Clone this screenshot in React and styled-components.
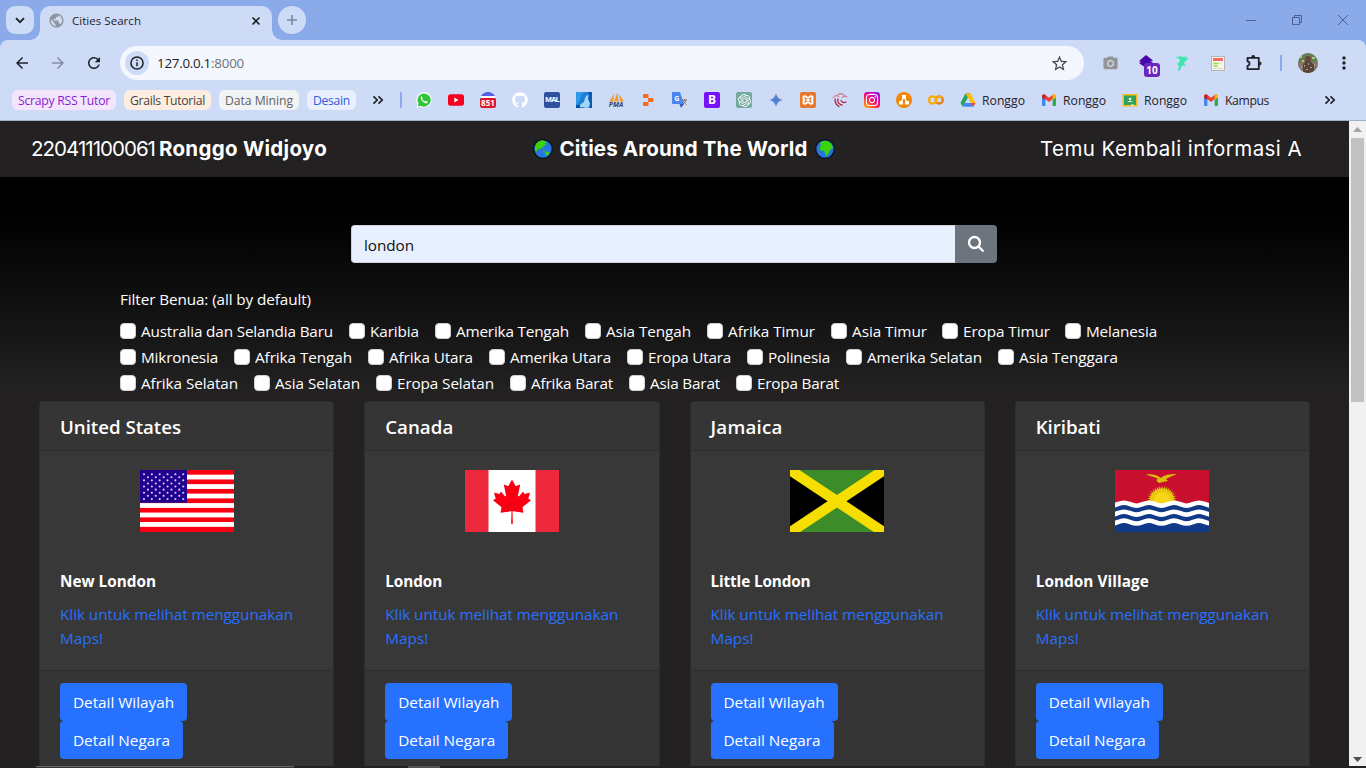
import React, { useLayoutEffect, useRef, useState } from "react";
import styled, { createGlobalStyle } from "styled-components";
import { FaGithub, FaInstagram } from "react-icons/fa";
import { SiOpenai } from "react-icons/si";
import { MdArrowBack, MdArrowForward, MdRefresh, MdStarBorder, MdMoreVert, MdPublic, MdPhotoCamera } from "react-icons/md";

const Global = createGlobalStyle`
  *, *::before, *::after { box-sizing: border-box; }
  body { margin: 0; overflow: hidden; font-family: "Open Sans", "Noto Sans", sans-serif; }
  svg { display: block; flex: none; }
  a { text-decoration: none; }
`;

/* Single line of text whose tracking is adjusted so that it fills a set width. */
const Line = styled.span`
  display: inline-block;
  white-space: pre;
`;
function Fit({ w, children }) {
  const ref = useRef(null);
  const [spacing, setSpacing] = useState(0);
  useLayoutEffect(() => {
    const natural = ref.current.getBoundingClientRect().width;
    setSpacing((w - natural) / ref.current.textContent.length);
  }, [w]);
  return <Line ref={ref} style={{ letterSpacing: spacing }}>{children}</Line>;
}

const Screen = styled.div`
  width: 1366px;
  height: 768px;
  display: flex;
  flex-direction: column;
  overflow: hidden;
  background: #232122;
`;

/* ---------- browser window ---------- */
const TabStrip = styled.div`
  height: 40px;
  flex: none;
  display: flex;
  padding: 6px 0 0 6px;
  background: #8aaaea;
`;
const TabMenu = styled.div`
  width: 28px;
  height: 28px;
  display: grid;
  place-items: center;
  border-radius: 9px;
  background: #cedbf6;
`;
const Tab = styled.div`
  position: relative;
  width: 232px;
  height: 34px;
  margin: 0 6px;
  padding: 0 9px 5px 8px;
  display: flex;
  align-items: center;
  border-radius: 10px 10px 0 0;
  background: #cedbf6;
  font-size: 11.5px;
  color: #1f2227;
  &::before, &::after {
    content: "";
    position: absolute;
    bottom: 0;
    width: 10px;
    height: 10px;
  }
  &::before { left: -10px; background: radial-gradient(circle at 0 0, transparent 9.5px, #cedbf6 10px); }
  &::after { right: -10px; background: radial-gradient(circle at 100% 0, transparent 9.5px, #cedbf6 10px); }
`;
const TabTitle = styled.div`
  flex: 1;
  margin-left: 7px;
`;
const NewTab = styled(TabMenu)`
  border-radius: 50%;
`;
const WindowButtons = styled.div`
  flex: 1;
  height: 28px;
  display: flex;
  align-items: center;
  justify-content: flex-end;
  gap: 34px;
  padding-right: 17px;
`;
const Chrome = styled.div`
  flex: none;
  height: 81px;
  background: #8aaaea;
`;
const ChromeInner = styled.div`
  height: 81px;
  background: #cedbf6;
  border-radius: 8px 8px 0 0;
  border-bottom: 1px solid #a1aecb;
`;
const Toolbar = styled.div`
  height: 46px;
  padding: 6px 10px 6px 13px;
  display: flex;
  align-items: center;
`;
const NavButtons = styled.div`
  flex: none;
  width: 107px;
  display: flex;
  gap: 18px;
  color: #1f2227;
`;
const Omnibox = styled.div`
  flex: none;
  width: 964px;
  height: 34px;
  padding: 0 15px 0 5px;
  display: flex;
  align-items: center;
  border-radius: 17px;
  background: #f4f7fd;
`;
const InfoButton = styled.div`
  width: 24px;
  height: 24px;
  display: grid;
  place-items: center;
  border-radius: 50%;
  background: #cedbf6;
`;
const Url = styled.div`
  flex: 1;
  display: flex;
  margin-left: 8px;
  font-size: 13.4px;
  color: #1f2227;
`;
const Port = styled.span`
  color: #6d7279;
`;
const Extensions = styled.div`
  flex: 1;
  display: flex;
  align-items: center;
  margin-left: 16px;
`;
const ExtSlot = styled.div`
  position: relative;
  flex: none;
  width: 20px;
  height: 20px;
  margin-right: ${(p) => p.$gap ?? 16}px;
  display: grid;
  place-items: center;
`;
const Badge = styled.div`
  position: absolute;
  left: 8px;
  top: 10px;
  width: 16px;
  height: 14px;
  border-radius: 3px;
  background: #6a27bd;
  color: #fff;
  font: 700 10px/14px "Open Sans", sans-serif;
  text-align: center;
`;
const Divider = styled.div`
  width: 2px;
  height: 16px;
  background: #8aaaea;
`;
const Bookmarks = styled.div`
  height: 28px;
  padding: 0 30px 0 12px;
  display: flex;
  align-items: center;
  font-size: 12.2px;
  color: #1f2227;
`;
const Chip = styled.div`
  width: ${(p) => p.$w}px;
  height: 20px;
  margin-right: 8px;
  display: flex;
  align-items: center;
  justify-content: center;
  border-radius: 6px;
  background: ${(p) => p.$bg};
  color: ${(p) => p.$fg};
`;
const BookmarkMore = styled.div`
  width: 30px;
  display: flex;
  align-items: center;
  justify-content: space-between;
  margin-left: 8px;
`;
const Icons = styled.div`
  display: flex;
  gap: 16px;
  margin: 0 16px 0 14px;
`;
const Named = styled.div`
  display: flex;
  align-items: center;
  gap: 6px;
  margin-right: 16px;
`;
const Overflow = styled.div`
  margin-left: auto;
`;
const Tile = styled.div`
  width: 16px;
  height: 16px;
  display: grid;
  place-items: center;
  border-radius: ${(p) => p.$r ?? 2}px;
  background: ${(p) => p.$bg};
  color: #fff;
  font: 700 ${(p) => p.$size ?? 7}px/1 "Open Sans", sans-serif;
`;
const HelmetIcon = styled.div`
  width: 16px;
  height: 16px;
  padding-top: 6px;
  border-radius: 8px 8px 3px 3px;
  background: linear-gradient(#5360e8 4px, #fff 4px, #fff 6px, #5360e8 6px);
`;
const Count = styled.div`
  height: 10px;
  border-radius: 3px;
  background: #df1725;
  color: #fff;
  font: 700 8px/10px "Open Sans", sans-serif;
  text-align: center;
`;

/* ---------- page ---------- */
const Viewport = styled.div`
  height: 645px;
  flex: none;
  display: flex;
`;
const Page = styled.div`
  width: 1349px;
  overflow: hidden;
  background: linear-gradient(#000 0, #000 90px, #0d0d0d 165px, #232122 270px);
`;
const Navbar = styled.nav`
  height: 56px;
  padding: 0 47px 0 31px;
  display: flex;
  align-items: center;
  justify-content: space-between;
  background: #232122;
  color: #fff;
  font: 400 20.5px/30px Inter, sans-serif;
`;
const Brand = styled.div`
  display: flex;
  align-items: center;
  gap: ${(p) => p.$gap}px;
`;
const Search = styled.form`
  width: 646px;
  height: 38px;
  margin: 48px 0 0 351px;
  display: flex;
`;
const Field = styled.div`
  flex: 1;
  padding: 7px 12px;
  border: 1px solid #ced4da;
  border-right: 0;
  border-radius: 4px 0 0 4px;
  background: #e8efff;
  font-size: 15.3px;
  line-height: 24px;
  color: #111;
`;
const Submit = styled.div`
  width: 42px;
  display: grid;
  place-items: center;
  border-radius: 0 4px 4px 0;
  background: #6c757d;
`;
const Filter = styled.section`
  margin: 24px 0 0 120px;
  color: #fff;
  font-size: 15.3px;
  line-height: 24px;
`;
const FilterRow = styled.div`
  display: flex;
  height: 26px;
  &:first-of-type { margin-top: 7px; }
`;
const Option = styled.label`
  display: flex;
  align-items: center;
  gap: 5px;
  margin-right: ${(p) => p.$gap}px;
`;
const Box = styled.span`
  width: 16px;
  height: 16px;
  border: 1px solid #d0d0d2;
  border-radius: 4px;
  background: #fff;
`;
const Cards = styled.div`
  display: grid;
  grid-template-columns: repeat(4, 295.25px);
  column-gap: 30px;
  margin: 5px 0 0 39px;
`;
const Card = styled.article`
  height: 400px;
  border: 1px solid #2d2d2d;
  border-radius: 4px;
  background: #383838;
  color: #fff;
  font-size: 15.3px;
`;
const CardHead = styled.header`
  height: 49px;
  padding: 0 20px;
  display: flex;
  align-items: center;
  border-bottom: 1px solid #2d2d2d;
  background: #353535;
  font-size: 18.7px;
  font-weight: 600;
`;
const CardBody = styled.div`
  height: 219px;
  padding: 18.5px 20px 0;
  display: flex;
  flex-direction: column;
  line-height: 24px;
`;
const Flag = styled.svg`
  align-self: center;
  width: 94px;
  height: 62.5px;
  margin-bottom: 37px;
`;
const City = styled.div`
  font-weight: 700;
  margin-bottom: 9px;
`;
const MapLink = styled.a`
  display: flex;
  flex-direction: column;
  align-items: flex-start;
  color: #2770ff;
`;
const CardFoot = styled.footer`
  height: 131px;
  padding: 12px 20px;
  display: flex;
  flex-direction: column;
  align-items: flex-start;
  border-top: 1px solid #2d2d2d;
  background: #353535;
`;
const Button = styled.a`
  width: ${(p) => p.$w}px;
  height: 38px;
  display: flex;
  align-items: center;
  justify-content: center;
  border-radius: 4px;
  background: #2672ff;
  color: #fff;
`;
const Scrollbar = styled.div`
  width: 17px;
  padding: 6px 2px 4px;
  display: flex;
  flex-direction: column;
  align-items: center;
  background: #f1f1f1;
`;
const Thumb = styled.div`
  width: 13px;
  height: 264px;
  margin: 6px 0 auto;
  background: #c1c1c1;
`;
const BottomEdge = styled.div`
  height: 2px;
  padding-left: 36px;
  display: flex;
  gap: 114px;
  background: #202223;
`;
const Edge = styled.div`
  width: ${(p) => p.$w}px;
  height: 2px;
  border-top: 1px solid ${(p) => p.$c};
  background: ${(p) => p.$bg};
`;

/* ---------- drawings ---------- */
const Chevrons = () => (
  <svg width="12" height="12" viewBox="0 0 12 12" fill="none" stroke="#1f2227" strokeWidth="1.7"><path d="M1.5 2.3 5.2 6 1.5 9.7M6.5 2.3 10.2 6 6.5 9.7" /></svg>
);
const WhatsApp = () => (
  <svg width="16" height="16" viewBox="0 0 16 16"><path d="M8 .3a7.6 7.6 0 0 1 0 15.3c-1.3 0-2.4-.3-3.5-.9L.3 15.9l1.2-4.1A7.6 7.6 0 0 1 8 .3z" fill="#fff" /><path d="M8 1.4a6.6 6.6 0 1 1-3.2 12.3l-3 .8.8-2.9A6.6 6.6 0 0 1 8 1.4z" fill="#2fc43a" /><path d="M5.5 4.3c-.9.5-1 1.7-.5 2.8.8 1.9 2.3 3.5 4.3 4.2 1 .3 2-.1 2.3-1 .1-.5 0-.6-.3-.8l-1.4-.7c-.3-.1-.4 0-.9.7-1.3-.5-2.3-1.4-2.9-2.6.5-.6.6-.7.5-1l-.6-1.4c-.1-.2-.3-.3-.5-.2z" fill="#fff" /></svg>
);
const YouTube = () => (
  <svg width="16" height="16" viewBox="0 0 16 16"><rect y="2.3" width="16" height="11.5" rx="2.5" fill="#f5001d" /><path d="m6.3 5.5 4.3 2.5-4.3 2.5z" fill="#fff" /></svg>
);
const Helmet = () => <HelmetIcon><Count><Fit w={14}>851</Fit></Count></HelmetIcon>;
const BlueArt = () => (
  <svg width="16" height="16" viewBox="0 0 16 16"><rect width="16" height="16" fill="#1e7fd8" /><path d="M0 0h8L5 4l-2 6-3 3z" fill="#2c9aea" /><path d="m3 15 2-3 3-2 1-4 2-3 2 1-1 3 2 4v4l-4 1-3-1z" fill="#9fd8f8" /><path d="M12 0h4v16h-3l1-5-2-5 1-3z" fill="#0f57b4" /><path d="M0 13h4v3H0z" fill="#0c4d9e" /></svg>
);
const Pma = () => (
  <svg width="16" height="16" viewBox="0 0 16 16"><path d="M6 2 1 9.5h4.5zM9.5 0 6 9.5h4.5zM11 2l1 7.5h4z" fill="#f29a32" /><text x="8" y="15.2" textAnchor="middle" fontFamily="Open Sans" fontWeight="700" fontStyle="italic" fontSize="6.8" fill="#394261">PMA</text></svg>
);
const Replit = () => (
  <svg width="16" height="16" viewBox="0 0 16 16" fill="#f26a1e"><rect x="3" y="2" width="5.5" height="4" rx="1" /><rect x="8" y="6" width="5.5" height="4" rx="1" /><rect x="3" y="10" width="5.5" height="4" rx="1" /></svg>
);
const Translate = () => (
  <svg width="16" height="16" viewBox="0 0 16 16"><path d="M6 4h10v12H9z" fill="#d7dce3" /><path d="M1 0h7l4 12H1a1 1 0 0 1-1-1V1a1 1 0 0 1 1-1z" fill="#4b86f0" /><path d="M7.5 12H12l-3 4z" fill="#315abc" /><text x="4.7" y="8.6" textAnchor="middle" fontFamily="Open Sans" fontWeight="700" fontSize="7" fill="#fff">G</text><path d="M10 8h5M12.5 7v1M14 8c-.5 2-1.5 3-3 4M11.5 9c.5 1.5 1.5 2.5 3 3.5" stroke="#6c737b" fill="none" /></svg>
);
const Gemini = () => (
  <svg width="16" height="16" viewBox="0 0 16 16"><defs><linearGradient id="gem" x1="0" x2="1" y1="1" y2="0"><stop stopColor="#418df5" /><stop offset=".55" stopColor="#4f80d6" /><stop offset="1" stopColor="#d46d7b" /></linearGradient></defs><path d="M8 1c.8 4 3 6.2 7 7-4 .8-6.2 3-7 7-.8-4-3-6.2-7-7 4-.8 6.2-3 7-7z" fill="url(#gem)" /></svg>
);
const Xampp = () => (
  <svg width="16" height="16" viewBox="0 0 16 16"><rect width="16" height="16" rx="2" fill="#e7792b" /><path d="M5 4.2c-1.600 0-2 1.300-1.500 2.300L4.200 8l-.7 1.500c-.5 1 0 2.300 1.500 2.300 1.300 0 1.500-1.500 3-1.500s1.700 1.500 3 1.500c1.500 0 2-1.300 1.500-2.300L11.800 8l.7-1.500c.5-1 .1-2.300-1.500-2.300-1.300 0-1.500 1.500-3 1.500s-1.700-1.500-3-1.500zM6.300 8h3.400" fill="none" stroke="#fff" strokeWidth="1.9" /></svg>
);
const Swirl = () => (
  <svg width="16" height="16" viewBox="0 0 16 16" fill="none" strokeLinecap="round"><path d="M1 5.5C3 3 6 3.5 7 4.500M6 2.500c3-1.500 6-.5 7 1.500M10 5.500c2-2 4-1.500 5-.5" stroke="#d5505f" strokeWidth="1" /><path d="M3 7c0 3 1 6 4 7.500M6 7c-1 3 1 5.500 4 6M9 8.500c1 2 3 2.500 5 1.500" stroke="#b3203c" strokeWidth="1.3" /></svg>
);
const Drawio = () => (
  <svg width="16" height="16" viewBox="0 0 16 16"><circle cx="8" cy="8" r="8" fill="#f08705" /><path d="M8 5 4.800 10.500M8 5l3.200 5.500" stroke="#fff" strokeWidth="1.3" /><g fill="#fff"><rect x="6" y="3" width="4" height="3.5" /><rect x="3" y="9" width="4" height="3.5" /><rect x="9" y="9" width="4" height="3.5" /></g></svg>
);
const Colab = () => (
  <svg width="16" height="16" viewBox="0 0 16 16" fill="none" strokeWidth="2.3"><path d="M7.200 5.500a3.600 3.600 0 1 0 0 5" stroke="#f9ab00" /><circle cx="11.2" cy="8" r="3.6" stroke="#e87a12" /><path d="M8.700 10.600a3.600 3.600 0 0 1 5-5.100" stroke="#f9ab00" /></svg>
);
const Drive = () => (
  <svg width="16" height="16" viewBox="0 0 16 16"><path d="M5.500 1.500h5L8 5.800 2.700 14.700.5 11z" fill="#21a35b" /><path d="M5.500 1.500h5l5 9.500h-4.700z" fill="#fbbc04" /><path d="M5.100 11h5.700l2.500 3.700H2.700z" fill="#4285f4" /><path d="M10.800 11h4.700l-2.200 3.700z" fill="#ea4335" /><path d="m8 5.800 2.800 5.200H5.100z" fill="#cedbf6" /></svg>
);
const Gmail = () => (
  <svg width="16" height="16" viewBox="0 0 16 16"><path d="M1 4.500V13a1 1 0 0 0 1 1h2.400V7z" fill="#4285f4" /><path d="M15 4.500V13a1 1 0 0 1-1 1h-2.400V7z" fill="#34a853" /><path d="M1 4.500C1 2.500 3 2 4.400 3L8 5.800 11.600 3C13 2 15 2.500 15 4.500L8 10z" fill="#ea4335" /><path d="M11.600 3C13 2 15 2.500 15 4.500v1L11.600 8z" fill="#fbbc04" /><path d="M1 4.500C1 2.500 3 2 4.400 3v5L1 5.500z" fill="#c5221f" /></svg>
);
const Classroom = () => (
  <svg width="16" height="16" viewBox="0 0 16 16"><rect x=".5" y="2" width="15" height="12.5" rx="1" fill="#f9bc14" /><rect x="2" y="3.500" width="12" height="9.500" fill="#30a35a" /><circle cx="8" cy="7" r="1.2" fill="#fff" /><path d="M5 10c1-1.500 5-1.500 6 0z" fill="#fff" /><path d="M9 12.500h3v1H9z" fill="#fff" /></svg>
);
const Purple = () => (
  <svg width="18" height="18" viewBox="0 0 18 18" fill="#4b05ac"><path d="m9 1 7 5.500-3 1.500h3l-7 6-7-5 2-1-2-1z" /></svg>
);
const Bird = () => (
  <svg width="16" height="18" viewBox="0 0 16 18" fill="#3fe6ac"><path d="m1 2 4 1.500L6 1.500l2 1.500 6-.5-3 1.500 4 .5-3.500 2.500L10 9l1.500 3.500-2.500-1-2 1.500-1 4-2-1 1-4-2-2 2.500-2 .5-2.500-3-1.500z" /></svg>
);
const Report = () => (
  <svg width="14" height="15" viewBox="0 0 14 15"><rect x=".5" y=".5" width="13" height="14" fill="#f7f4ed" stroke="#b7b5af" /><path d="M2 2h10v3H2z" fill="#fb6868" /><path d="M2.500 7.500h5M2.500 10h4" stroke="#94df27" strokeWidth="1.5" /><path d="M8 7.500h3M2 12.500h10" stroke="#ded8d0" /></svg>
);
const Puzzle = () => (
  <svg width="18" height="18" viewBox="0 0 18 18"><path d="M2.500 3.800h11.300v11.400H2.500v-3.400c2.700-.2 2.700-4.200 0-4.400z" fill="none" stroke="#1f2227" strokeWidth="1.8" strokeLinejoin="round" /><path d="M6.200 3.500a2 2.400 0 0 1 4 0zM14.200 7.500a2.400 2 0 0 1 0 4z" fill="#1f2227" /></svg>
);
const Avatar = () => (
  <svg width="20" height="20" viewBox="0 0 20 20"><defs><clipPath id="face"><circle cx="10" cy="10" r="10" /></clipPath></defs><g clipPath="url(#face)"><path fill="#657d50" d="M0 0h20v20H0z" /><path d="M0 9h20v11H0z" fill="#8a776b" /><path d="M5 20V11l3-3h4l4 4v8z" fill="#59443b" /><circle cx="10" cy="6" r="3" fill="#69453a" /><path d="M2 3h2v2H2zM14 4h3v2h-3zM4 7h2v2H4z" fill="#a8c889" /><path d="M6 12h1v2H6zM10 10h1v2h-1zM12 14h2v1h-2zM8 16h2v1H8zM3 13h1v2H3zM16 11h1v2h-1z" fill="#b49a86" /></g></svg>
);
const Info = () => (
  <svg width="14" height="14" viewBox="0 0 14 14"><circle cx="7" cy="7" r="6.1" fill="none" stroke="#1f2227" strokeWidth="1.5" /><path d="M6.250 6.300h1.500v4h-1.500zM6.250 3.600h1.500v1.500h-1.500z" fill="#1f2227" /></svg>
);
const Globe = ({ africa }) => (
  <svg width="20" height="20" viewBox="0 0 20 20"><circle cx="10" cy="10" r="9.3" fill="#2874dd" stroke="#080d14" strokeWidth="1.2" />{africa
    ? <path d="M5 4 8 2h5l3 2.500 2 4-2.500 2-1.500 3-1.500 3-1.500.5-1.200-3-.5-2-3.800-.5L4.500 8.500 6 6z" fill="#3bd40a" />
    : <path d="M2 11C1.500 6 4 2 8.500 1.500c2 0 4 .5 5.500 1.500l-2 1 1.500 1.500-3 1.500.5 1.500-2-.5-1.500 2.500-1-1.500L4.500 11l-1 2zM9.500 11.500l2.500.5-.5 1.500zM12.500 13l2.500-.7 1.500 2.200-2.500 2-2-1z" fill="#3bd40a" />}</svg>
);

const UsFlag = () => (
  <Flag viewBox="0 0 94 63" preserveAspectRatio="none">
    <rect width="94" height="63" fill="#fff" />
    {[0, 1, 2, 3, 4, 5, 6].map((i) => <rect key={i} y={i * 9.55} width="94" height={i === 6 ? 5.7 : 4.7} fill="#f80012" />)}
    <rect width="47" height="33" fill="#20008f" />
    {Array.from({ length: 9 }, (_, r) => Array.from({ length: r % 2 ? 5 : 6 }, (_, c) => (
      <circle key={`${r}-${c}`} cx={4 + c * 7.85 + (r % 2 ? 3.9 : 0)} cy={4.2 + r * 3.12} r="1.05" fill="#d8cff0" />
    )))}
  </Flag>
);
const CaFlag = () => (
  <Flag viewBox="0 0 94 63" preserveAspectRatio="none">
    <rect width="94" height="63" fill="#ee283c" /><rect x="23.5" width="47" height="63" fill="#fff" />
    <path d="m47 9.500 3.300 6.200c.4.600 1 .6 1.500.3l3.400-1.500-2.200 11.300c-.1.800.5 1 1.200.4l4-4.600.9 2c.1.400.5.5.9.4l5-1-1.500 5.300c-.1.500 0 .8.500 1l2 1.200-8 6.600c-.5.400-.5.7-.4 1.200l.9 4.700-10.200-1.300c-.6-.1-.8.2-.8.7l.4 11.700h-1.800l.4-11.700c0-.5-.2-.8-.8-.7L35.500 43l.9-4.700c.1-.5.1-.8-.4-1.200l-8-6.600 2-1.200c.5-.2.6-.5.5-1L29 23l5 1c.4.1.8 0 .9-.4l.9-2 4 4.600c.7.600 1.300.4 1.200-.4L38.800 14.500l3.400 1.500c.5.300 1.100.3 1.500-.3z" fill="#f80012" />
  </Flag>
);
const JmFlag = () => (
  <Flag viewBox="0 0 94 63" preserveAspectRatio="none">
    <rect width="94" height="63" fill="#3c8d29" /><path d="M0 0 47 31.500 0 63zM94 0 47 31.500 94 63z" fill="#000" /><path d="m0 0 94 63M94 0 0 63" stroke="#f6df00" strokeWidth="10.5" />
  </Flag>
);
const wave = (y) => [0, 1, 2, 3].map((k) => `M${-3.5 + k * 25} ${y}c5 0 7.500-3 12.500-3s7.500 3 12.500 3`).join("");
const KiFlag = () => (
  <Flag viewBox="0 0 94 63" preserveAspectRatio="none">
    <rect width="94" height="35" fill="#c8102e" />
    {Array.from({ length: 19 }, (_, i) => <path key={i} d="m47 16 2 7h-4z" fill="#dec009" transform={`rotate(${(i - 9) * 10} 47 31)`} />)}
    <circle cx="47" cy="31" r="12" fill="#e9c70f" /><circle cx="47" cy="31" r="8.5" fill="#f9d617" />
    <path d="M31 4c6 0 11 1 15 4 3-3 8-4 16-4-4 2-8 3-11 5l2 2-5 1-4 1-3-3 2-1c-3-2-7-2-12-5z" fill="#d9bd0b" />
    <rect y="35.5" width="94" height="27.5" fill="#103a88" />
    <g fill="none" stroke="#fff" strokeWidth="4.6">{[36, 45, 54].map((y) => <path key={y} d={wave(y)} />)}</g>
  </Flag>
);

/* ---------- data ---------- */
const chips = [
  { label: "Scrapy RSS Tutor", w: 104, t: 92, bg: "#f2e5fc", fg: "#8a1bd5" },
  { label: "Grails Tutorial", w: 87, t: 75, bg: "#feeee1", fg: "#474340" },
  { label: "Data Mining", w: 80, t: 68, bg: "#f1f3f4", fg: "#5f6368" },
  { label: "Desain", w: 49, t: 37, bg: "#e8f0fe", fg: "#2d5bdc" },
];
const filters = [
  [["Australia dan Selandia Baru", 192, 16], ["Karibia", 49, 16], ["Amerika Tengah", 113, 16], ["Asia Tengah", 85, 16], ["Afrika Timur", 87, 16], ["Asia Timur", 75, 15], ["Eropa Timur", 87, 15], ["Melanesia", 71, 0]],
  [["Mikronesia", 77, 16], ["Afrika Tengah", 97, 16], ["Afrika Utara", 84, 16], ["Amerika Utara", 101, 16], ["Eropa Utara", 83, 16], ["Polinesia", 62, 16], ["Amerika Selatan", 115, 16], ["Asia Tenggara", 99, 0]],
  [["Afrika Selatan", 97, 16], ["Asia Selatan", 85, 16], ["Eropa Selatan", 97, 16], ["Afrika Barat", 82, 16], ["Asia Barat", 70, 16], ["Eropa Barat", 82, 0]],
];
const cities = [
  { country: "United States", cw: 121, city: "New London", w: 96, flag: <UsFlag /> },
  { country: "Canada", cw: 68, city: "London", w: 57, flag: <CaFlag /> },
  { country: "Jamaica", cw: 72, city: "Little London", w: 100, flag: <JmFlag /> },
  { country: "Kiribati", cw: 65, city: "London Village", w: 113, flag: <KiFlag /> },
];

function BookmarkBar() {
  return (
    <Bookmarks>
      {chips.map((c) => <Chip key={c.label} $w={c.w} $bg={c.bg} $fg={c.fg}><Fit w={c.t}>{c.label}</Fit></Chip>)}
      <BookmarkMore><Chevrons /><Divider /></BookmarkMore>
      <Icons>
        <WhatsApp /><YouTube /><Helmet />
        <FaGithub size={16} color="#fff" />
        <Tile $bg="#2e51a2" $size={7.5}><Fit w={14}>MAL</Fit></Tile>
        <BlueArt /><Pma /><Replit /><Translate />
        <Tile $bg="#7610f5" $size={12}>B</Tile>
        <Tile $bg="#74aa9c"><SiOpenai size={13} /></Tile>
        <Gemini /><Xampp /><Swirl />
        <Tile $bg="linear-gradient(35deg,#ffc400,#fc244f 40%,#e000b8 65%,#7725ed)" $r={3}><FaInstagram size={14} /></Tile>
        <Drawio /><Colab />
      </Icons>
      <Named><Drive /><Fit w={43}>Ronggo</Fit></Named>
      <Named><Gmail /><Fit w={43}>Ronggo</Fit></Named>
      <Named><Classroom /><Fit w={43}>Ronggo</Fit></Named>
      <Named><Gmail /><Fit w={44}>Kampus</Fit></Named>
      <Overflow><Chevrons /></Overflow>
    </Bookmarks>
  );
}

function Browser() {
  return (
    <>
      <TabStrip>
        <TabMenu><svg width="10" height="7" viewBox="0 0 10 7" fill="none" stroke="#1f2227" strokeWidth="1.9"><path d="m1 1.200 4 4 4-4" /></svg></TabMenu>
        <Tab>
          <MdPublic size={17} color="#8e959e" />
          <TabTitle><Fit w={69}>Cities Search</Fit></TabTitle>
          <svg width="14" height="14" viewBox="0 0 14 14" stroke="#1f2227" strokeWidth="1.6"><path d="m3.500 3.500 7 7m0-7-7 7" /></svg>
        </Tab>
        <NewTab><svg width="12" height="12" viewBox="0 0 12 12" stroke="#7988a5" strokeWidth="1.6"><path d="M6 1v10M1 6h10" /></svg></NewTab>
        <WindowButtons>
          <svg width="12" height="12" viewBox="0 0 12 12" stroke="#4d618a"><path d="M1 6.500h10" /></svg>
          <svg width="12" height="12" viewBox="0 0 12 12" stroke="#4d618a" fill="none"><path d="M1.500 3.500h7v7h-7zM3.500 3.500v-2h7v7h-2" /></svg>
          <svg width="12" height="12" viewBox="0 0 12 12" stroke="#4d618a"><path d="m1 1 10 10M11 1 1 11" /></svg>
        </WindowButtons>
      </TabStrip>
      <Chrome>
        <ChromeInner>
          <Toolbar>
            <NavButtons><MdArrowBack size={18} /><MdArrowForward size={18} color="#838fa6" /><MdRefresh size={18} /></NavButtons>
            <Omnibox>
              <InfoButton><Info /></InfoButton>
              <Url><Fit w={54}>127.0.0.1</Fit><Port><Fit w={33}>:8000</Fit></Port></Url>
              <MdStarBorder size={19} color="#474b51" />
            </Omnibox>
            <Extensions>
              <ExtSlot><MdPhotoCamera size={17} color="#949494" /></ExtSlot>
              <ExtSlot><Purple /><Badge>10</Badge></ExtSlot>
              <ExtSlot><Bird /></ExtSlot>
              <ExtSlot><Report /></ExtSlot>
              <ExtSlot $gap={7}><Puzzle /></ExtSlot>
              <ExtSlot $gap={7}><Divider /></ExtSlot>
              <ExtSlot><Avatar /></ExtSlot>
              <MdMoreVert size={20} color="#1f2227" />
            </Extensions>
          </Toolbar>
          <BookmarkBar />
        </ChromeInner>
      </Chrome>
    </>
  );
}

export default function App() {
  return (
    <Screen>
      <Global />
      <Browser />
      <Viewport>
        <Page>
          <Navbar>
            <Brand $gap={4}><Fit w={124}>220411100061</Fit><b><Fit w={168}>Ronggo Widjoyo</Fit></b></Brand>
            <Brand $gap={7}><Globe /><b><Fit w={248}>Cities Around The World</Fit></b><Globe africa /></Brand>
            <Brand><Fit w={262}>Temu Kembali informasi A</Fit></Brand>
          </Navbar>
          <Search>
            <Field><Fit w={50}>london</Fit></Field>
            <Submit><svg width="18" height="18" viewBox="0 0 18 18" fill="none" stroke="#fff" strokeWidth="2.3"><circle cx="7.5" cy="7.5" r="5.5" /><path d="m11.500 11.500 5 5" /></svg></Submit>
          </Search>
          <Filter>
            <Fit w={191}>Filter Benua: (all by default)</Fit>
            {filters.map((row, i) => (
              <FilterRow key={i}>
                {row.map(([name, w, gap]) => <Option key={name} $gap={gap}><Box /><Fit w={w}>{name}</Fit></Option>)}
              </FilterRow>
            ))}
          </Filter>
          <Cards>
            {cities.map((c) => (
              <Card key={c.country}>
                <CardHead><Fit w={c.cw}>{c.country}</Fit></CardHead>
                <CardBody>
                  {c.flag}
                  <City><Fit w={c.w}>{c.city}</Fit></City>
                  <MapLink><Fit w={233}>Klik untuk melihat menggunakan</Fit><Fit w={43}>Maps!</Fit></MapLink>
                </CardBody>
                <CardFoot>
                  <Button $w={127}><Fit w={101}>Detail Wilayah</Fit></Button>
                  <Button $w={123}><Fit w={97}>Detail Negara</Fit></Button>
                </CardFoot>
              </Card>
            ))}
          </Cards>
        </Page>
        <Scrollbar>
          <svg width="9" height="5" viewBox="0 0 9 5" fill="#a3a3a3"><path d="M4.500 0 9 5H0z" /></svg>
          <Thumb />
          <svg width="9" height="5" viewBox="0 0 9 5" fill="#505050"><path d="M0 0h9L4.500 5z" /></svg>
        </Scrollbar>
      </Viewport>
      <BottomEdge><Edge $w={258} $c="#6b6b6b" $bg="#333" /><Edge $w={32} $c="#555" $bg="#555" /></BottomEdge>
    </Screen>
  );
}
